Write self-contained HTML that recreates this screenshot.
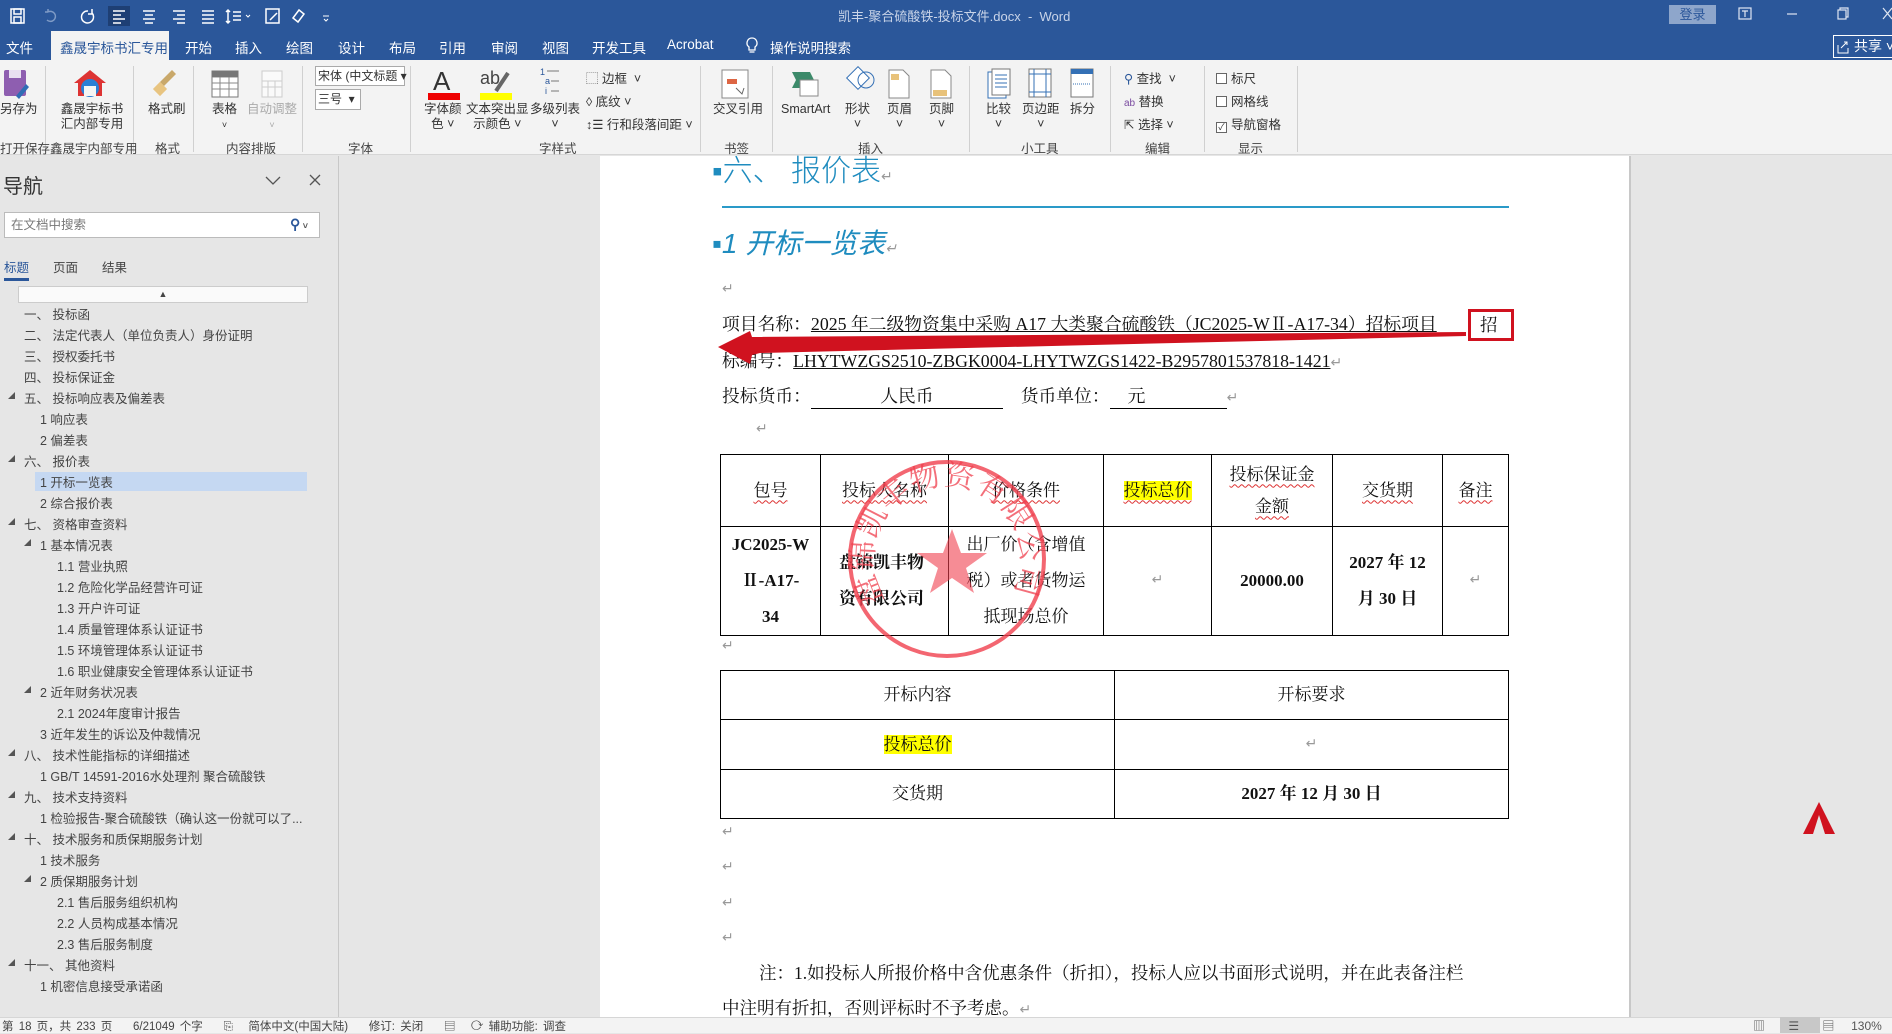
<!DOCTYPE html>
<html><head><meta charset="utf-8">
<style>
*{margin:0;padding:0;box-sizing:border-box}
body{width:1892px;height:1033px;overflow:hidden;position:relative;background:#e6e6e6;font-family:"Liberation Sans","Noto Sans CJK SC",sans-serif;color:#333}
.a{position:absolute;white-space:nowrap}
.tb{background:#2b579a}
.tab{position:absolute;top:37px;font-size:13.5px;color:#fff}
.rl{position:absolute;font-size:12.5px;color:#333;text-align:center;line-height:15px}
.gl{position:absolute;top:138px;font-size:12.5px;color:#444}
.sep{position:absolute;top:66px;width:1px;height:86px;background:#d0d0d0}
.nav{position:absolute;font-size:12.5px;color:#444}
.tri{position:absolute;width:0;height:0;border-left:7px solid transparent;border-bottom:7px solid #555}
.doc{font-family:"Liberation Serif","Noto Serif CJK SC",serif;color:#111}
.ret{color:#999;font-size:14px}
table{border-collapse:collapse;position:absolute}
td{border:1.5px solid #000;text-align:center;font-family:"Liberation Serif","Noto Serif CJK SC",serif;font-size:17px;color:#111;line-height:36px;padding:0}
.u{text-decoration:underline wavy #d33;text-decoration-thickness:1px;text-underline-offset:4px}
.hl{background:#ffff00}
.ico{position:absolute}
.cb{display:inline-block;width:11px;height:11px;border:1px solid #666;background:#fff;vertical-align:-1px;margin-right:4px}
</style></head><body>
<!-- title bar -->
<div class="a tb" style="left:0;top:0;width:1892px;height:60px"></div>
<svg class="ico" style="left:8px;top:6px" width="330" height="20" viewBox="0 0 330 20" fill="none" stroke="#fff" stroke-width="1.5">
<rect x="3" y="3" width="13" height="14"/><rect x="6" y="3" width="7" height="5"/><rect x="6" y="11" width="7" height="6"/>
<path d="M40 6 a5 5 0 1 1 -1 8 M40 6 l-3 0 M40 6 l0 -3" stroke="#7f9bc6"/>
<path d="M80 5 a6 6 0 1 0 4 2 M84 3 v5 h-4"/>
<rect x="100" y="0" width="22" height="20" fill="#1e3f74" stroke="none"/>
<path d="M105 5h12M105 9h8M105 13h12M105 17h8"/>
<path d="M135 5h12M137 9h8M135 13h12M137 17h8"/>
<path d="M165 5h12M169 9h8M165 13h12M169 17h8"/>
<path d="M194 5h12M194 9h12M194 13h12M194 17h12"/>
<path d="M220 4v13M218 6l2-2 2 2M218 15l2 2 2-2M225 6h8M225 10h8M225 14h8"/>
<path d="M238 9l2 2 2-2" stroke-width="1"/>
<rect x="258" y="3" width="13" height="14"/><path d="M262 14l7-7"/>
<path d="M285 12l6-8 5 4-6 8z"/>
<path d="M315 10h6M316 13l2 2 2-2" stroke-width="1"/>
</svg>
<div class="a" style="left:838px;top:6px;font-size:13px;color:#c9d4e8">凯丰-聚合硫酸铁-投标文件.docx&nbsp; -&nbsp; Word</div>
<div class="a" style="left:1669px;top:5px;width:47px;height:19px;background:#8ea6cb;color:#2b579a;font-size:13px;text-align:center;line-height:19px">登录</div>
<svg class="ico" style="left:1735px;top:5px" width="157" height="20" fill="none" stroke="#dfe6f2" stroke-width="1.2">
<rect x="4" y="3" width="12" height="11"/><path d="M7 6h6M10 6v6"/>
<path d="M52 9h10"/><rect x="103" y="5" width="8" height="9"/><path d="M105 5v-2h8v9h-2"/>
<path d="M148 3l9 11M157 3l-9 11"/>
</svg>
<div class="tab" style="left:6px">文件</div>
<div class="a" style="left:51px;top:31px;width:118px;height:29px;background:#f3f3f3"></div>
<div class="tab" style="left:60px;color:#2b579a">鑫晟宇标书汇专用</div>
<div class="tab" style="left:185px">开始</div><div class="tab" style="left:235px">插入</div><div class="tab" style="left:286px">绘图</div><div class="tab" style="left:338px">设计</div><div class="tab" style="left:389px">布局</div><div class="tab" style="left:439px">引用</div><div class="tab" style="left:491px">审阅</div><div class="tab" style="left:542px">视图</div><div class="tab" style="left:592px">开发工具</div><div class="tab" style="left:667px">Acrobat</div>
<svg class="ico" style="left:744px;top:36px" width="16" height="20" fill="none" stroke="#fff" stroke-width="1.3"><path d="M8 2a5 5 0 0 0-3 9v3h6v-3a5 5 0 0 0-3-9zM5.5 16h5"/></svg>
<div class="tab" style="left:770px">操作说明搜索</div>
<div class="a" style="left:1833px;top:35px;width:62px;height:23px;border:1px solid #fff;color:#fff;font-size:14px;padding-left:20px;line-height:21px">共享 ˅</div>
<svg class="ico" style="left:1836px;top:39px" width="14" height="16" fill="none" stroke="#fff"><path d="M2 6v8h10v-5M5 9l6-6M8 3h3v3"/></svg>
<!-- ribbon -->
<div class="a" style="left:0;top:60px;width:1892px;height:95px;background:#f3f3f3;border-bottom:1px solid #d6d6d6"></div>
<div class="sep" style="left:45px"></div><div class="sep" style="left:133px"></div><div class="sep" style="left:193px"></div><div class="sep" style="left:302px"></div><div class="sep" style="left:410px"></div><div class="sep" style="left:700px"></div><div class="sep" style="left:772px"></div><div class="sep" style="left:969px"></div><div class="sep" style="left:1110px"></div><div class="sep" style="left:1204px"></div><div class="sep" style="left:1297px"></div>
<svg class="ico" style="left:0;top:66px" width="1300" height="40">
<rect x="4" y="4" width="22" height="26" rx="2" fill="#8e5eb0"/><rect x="9" y="4" width="12" height="8" fill="#e9e0f1"/><path d="M16 30l10-12 3 3-10 12z" fill="#2f6db5"/>
<path d="M90 4l-16 13h4v13h24v-13h4z" fill="#d33"/><circle cx="90" cy="22" r="9" fill="#2b7fd6"/><rect x="84" y="20" width="12" height="10" fill="#f5f5f5"/>
<path d="M160 16l12-12 4 4-12 12z" fill="#c9a86a"/><rect x="155" y="18" width="10" height="10" fill="#e8c480" transform="rotate(45 160 23)"/>
<rect x="212" y="5" width="26" height="26" fill="#fff" stroke="#777"/><path d="M212 11h26M212 17h26M212 23h26M220 5v26M229 5v26" stroke="#888"/><rect x="212" y="5" width="26" height="6" fill="#777"/>
<rect x="262" y="5" width="20" height="26" fill="#fafafa" stroke="#ccc"/><path d="M262 15h20M262 21h20M268 15v16M275 15v16" stroke="#ccc"/>
<text x="433" y="24" font-size="26" font-family="Liberation Sans" fill="#333">A</text><rect x="428" y="27" width="32" height="7" fill="#e00"/>
<text x="480" y="18" font-size="18" font-family="Liberation Sans" fill="#444">ab</text><path d="M496 25l12-18" stroke="#666" stroke-width="4"/><rect x="480" y="27" width="32" height="7" fill="#ff0"/>
<text x="540" y="9" font-size="9" fill="#2b579a">1</text><path d="M547 5h12M551 15h8M551 25h8" stroke="#777"/><text x="545" y="18" font-size="9" fill="#2b579a">a</text><text x="545" y="28" font-size="9" fill="#2b579a">i</text>
<rect x="722" y="4" width="26" height="28" fill="#fff" stroke="#888"/><rect x="727" y="13" width="10" height="5" fill="#d64"/><path d="M736 22l6 6 2-6" stroke="#666" fill="none"/>
<path d="M792 6h18l4 8-4 8h-18l4-8z" fill="#3c8a6a"/><rect x="800" y="14" width="18" height="16" fill="#fff" stroke="#888"/>
<rect x="850" y="4" width="16" height="16" fill="#fff" stroke="#3470b5" transform="rotate(45 858 12)"/><circle cx="866" cy="14" r="8" fill="none" stroke="#3470b5"/>
<path d="M889 4h14l6 6v22h-20z" fill="#fff" stroke="#888"/><rect x="891" y="8" width="8" height="6" fill="#e8c27a"/>
<path d="M931 4h14l6 6v22h-20z" fill="#fff" stroke="#888"/><rect x="933" y="24" width="14" height="6" fill="#e8c27a"/>
<rect x="988" y="6" width="18" height="26" fill="#fff" stroke="#3470b5"/><rect x="992" y="3" width="18" height="26" fill="#fff" stroke="#777"/><path d="M995 9h12M995 13h12M995 17h12M995 21h12" stroke="#3470b5"/>
<rect x="1029" y="3" width="22" height="28" fill="#fff" stroke="#777"/><path d="M1034 3v28M1046 3v28M1029 8h22M1029 26h22" stroke="#3470b5"/>
<rect x="1071" y="3" width="22" height="28" fill="#fff" stroke="#777"/><rect x="1071" y="3" width="22" height="5" fill="#3470b5"/><path d="M1073 18h18" stroke="#3470b5" stroke-dasharray="1 1"/>
</svg>
<div class="rl" style="left:0;top:102px">另存为</div>
<div class="rl" style="left:60px;top:102px;width:64px">鑫晟宇标书<br>汇内部专用</div>
<div class="rl" style="left:148px;top:102px">格式刷</div>
<div class="rl" style="left:212px;top:102px">表格<br><span style="font-size:9px">˅</span></div>
<div class="rl" style="left:247px;top:102px;color:#aaa">自动调整<br><span style="font-size:9px">˅</span></div>
<div class="a" style="left:315px;top:66px;width:90px;height:20px;background:#fff;border:1px solid #aaa;font-size:12px;line-height:18px;padding-left:2px">宋体 (中文标题 ▾</div>
<div class="a" style="left:315px;top:89px;width:46px;height:21px;background:#fff;border:1px solid #aaa;font-size:12px;line-height:19px;padding-left:2px">三号 &nbsp;▾</div>
<div class="rl" style="left:424px;top:102px">字体颜<br>色 ˅</div>
<div class="rl" style="left:466px;top:102px">文本突出显<br>示颜色 ˅</div>
<div class="rl" style="left:530px;top:102px">多级列表<br>˅</div>
<div class="a" style="left:586px;top:68px;font-size:12.5px">⬚ 边框 &nbsp;˅</div>
<div class="a" style="left:586px;top:91px;font-size:12.5px">◊ 底纹 ˅</div>
<div class="a" style="left:586px;top:114px;font-size:12.5px">↕☰ 行和段落间距 ˅</div>
<div class="rl" style="left:713px;top:102px">交叉引用</div>
<div class="rl" style="left:781px;top:102px">SmartArt</div>
<div class="rl" style="left:845px;top:102px">形状<br>˅</div>
<div class="rl" style="left:887px;top:102px">页眉<br>˅</div>
<div class="rl" style="left:929px;top:102px">页脚<br>˅</div>
<div class="rl" style="left:986px;top:102px">比较<br>˅</div>
<div class="rl" style="left:1022px;top:102px">页边距<br>˅</div>
<div class="rl" style="left:1070px;top:102px">拆分</div>
<div class="a" style="left:1124px;top:68px;font-size:12.5px"><span style="color:#2b579a">⚲</span> 查找 &nbsp;˅</div>
<div class="a" style="left:1124px;top:91px;font-size:12.5px"><span style="color:#7a4ba0;font-size:10px">ab</span> 替换</div>
<div class="a" style="left:1124px;top:114px;font-size:12.5px">⇱ 选择 ˅</div>
<div class="a" style="left:1216px;top:68px;font-size:12.5px"><span class="cb"></span>标尺</div>
<div class="a" style="left:1216px;top:91px;font-size:12.5px"><span class="cb"></span>网格线</div>
<div class="a" style="left:1216px;top:114px;font-size:12.5px"><span class="cb" style="font-size:9px;line-height:9px;text-align:center">✓</span>导航窗格</div>
<div class="gl" style="left:0">打开保存</div><div class="gl" style="left:50px">鑫晟宇内部专用</div><div class="gl" style="left:155px">格式</div><div class="gl" style="left:226px">内容排版</div><div class="gl" style="left:348px">字体</div><div class="gl" style="left:539px">字样式</div><div class="gl" style="left:724px">书签</div><div class="gl" style="left:858px">插入</div><div class="gl" style="left:1021px">小工具</div><div class="gl" style="left:1145px">编辑</div><div class="gl" style="left:1238px">显示</div>
<!-- nav pane -->
<div class="a" style="left:338px;top:156px;width:1px;height:861px;background:#c8c8c8"></div>
<div class="a" style="left:3px;top:170px;font-size:20px;color:#333">导航</div>
<svg class="ico" style="left:263px;top:172px" width="60" height="18" fill="none" stroke="#555" stroke-width="1.3"><path d="M3 5l7 7 7-7M47 3l10 10M57 3l-10 10"/></svg>
<div class="a" style="left:4px;top:212px;width:316px;height:26px;background:#fff;border:1px solid #bbb;font-size:12.5px;color:#777;line-height:24px;padding-left:6px">在文档中搜索</div>
<div class="a" style="left:290px;top:216px;font-size:14px;color:#2b579a;font-weight:bold">⚲<span style="font-size:9px;color:#555"> ˅</span></div>
<div class="a" style="left:4px;top:257px;font-size:12.5px;color:#2b579a">标题</div>
<div class="a" style="left:4px;top:278px;width:25px;height:3px;background:#2b579a"></div>
<div class="a" style="left:53px;top:257px;font-size:12.5px;color:#444">页面</div>
<div class="a" style="left:102px;top:257px;font-size:12.5px;color:#444">结果</div>
<div class="a" style="left:18px;top:286px;width:290px;height:17px;background:#fafafa;border:1px solid #ccc;text-align:center;font-size:9px;line-height:15px;color:#444">▲</div>
<div class="a" style="left:35px;top:472px;width:272px;height:19px;background:#c5d8f2"></div>
<div class="nav" style="left:24px;top:304px">一、 投标函</div>
<div class="nav" style="left:24px;top:325px">二、 法定代表人（单位负责人）身份证明</div>
<div class="nav" style="left:24px;top:346px">三、 授权委托书</div>
<div class="nav" style="left:24px;top:367px">四、 投标保证金</div>
<div class="tri" style="left:8px;top:392px"></div><div class="nav" style="left:24px;top:388px">五、 投标响应表及偏差表</div>
<div class="nav" style="left:40px;top:409px">1 响应表</div>
<div class="nav" style="left:40px;top:430px">2 偏差表</div>
<div class="tri" style="left:8px;top:455px"></div><div class="nav" style="left:24px;top:451px">六、 报价表</div>
<div class="nav" style="left:40px;top:472px">1 开标一览表</div>
<div class="nav" style="left:40px;top:493px">2 综合报价表</div>
<div class="tri" style="left:8px;top:518px"></div><div class="nav" style="left:24px;top:514px">七、 资格审查资料</div>
<div class="tri" style="left:24px;top:539px"></div><div class="nav" style="left:40px;top:535px">1 基本情况表</div>
<div class="nav" style="left:57px;top:556px">1.1 营业执照</div>
<div class="nav" style="left:57px;top:577px">1.2 危险化学品经营许可证</div>
<div class="nav" style="left:57px;top:598px">1.3 开户许可证</div>
<div class="nav" style="left:57px;top:619px">1.4 质量管理体系认证证书</div>
<div class="nav" style="left:57px;top:640px">1.5 环境管理体系认证证书</div>
<div class="nav" style="left:57px;top:661px">1.6 职业健康安全管理体系认证证书</div>
<div class="tri" style="left:24px;top:686px"></div><div class="nav" style="left:40px;top:682px">2 近年财务状况表</div>
<div class="nav" style="left:57px;top:703px">2.1 2024年度审计报告</div>
<div class="nav" style="left:40px;top:724px">3 近年发生的诉讼及仲裁情况</div>
<div class="tri" style="left:8px;top:749px"></div><div class="nav" style="left:24px;top:745px">八、 技术性能指标的详细描述</div>
<div class="nav" style="left:40px;top:766px">1 GB/T 14591-2016水处理剂 聚合硫酸铁</div>
<div class="tri" style="left:8px;top:791px"></div><div class="nav" style="left:24px;top:787px">九、 技术支持资料</div>
<div class="nav" style="left:40px;top:808px">1 检验报告-聚合硫酸铁（确认这一份就可以了...</div>
<div class="tri" style="left:8px;top:833px"></div><div class="nav" style="left:24px;top:829px">十、 技术服务和质保期服务计划</div>
<div class="nav" style="left:40px;top:850px">1 技术服务</div>
<div class="tri" style="left:24px;top:875px"></div><div class="nav" style="left:40px;top:871px">2 质保期服务计划</div>
<div class="nav" style="left:57px;top:892px">2.1 售后服务组织机构</div>
<div class="nav" style="left:57px;top:913px">2.2 人员构成基本情况</div>
<div class="nav" style="left:57px;top:934px">2.3 售后服务制度</div>
<div class="tri" style="left:8px;top:959px"></div><div class="nav" style="left:24px;top:955px">十一、 其他资料</div>
<div class="nav" style="left:40px;top:976px">1 机密信息接受承诺函</div>
<!-- page -->
<div class="a" style="left:600px;top:156px;width:1031px;height:861px;background:#fff;border-right:2px solid #c8c8c8"></div>
<div class="a" style="left:1803px;top:802px;width:0;height:0;border-left:16px solid transparent;border-right:16px solid transparent;border-bottom:32px solid #d0121f"></div>
<div class="a" style="left:1813px;top:815px;width:0;height:0;border-left:6px solid transparent;border-right:6px solid transparent;border-bottom:19px solid #e6e6e6"></div>
<div class="a doc" style="left:712px;top:146px;font-size:30px;color:#1f8cbf;font-family:'Liberation Sans','Noto Sans CJK SC',sans-serif;font-weight:300">▪六、 报价表<span class="ret">↵</span></div>
<div class="a" style="left:722px;top:206px;width:787px;height:1.5px;background:#2a9ac8"></div>
<div class="a doc" style="left:712px;top:222px;font-size:28px;color:#1f8cbf;font-style:italic;font-family:'Liberation Sans','Noto Sans CJK SC',sans-serif">▪1 开标一览表<span class="ret">↵</span></div>
<div class="a ret" style="left:722px;top:280px">↵</div>
<div class="a doc" style="left:722px;top:311px;font-size:17.8px">项目名称：<u>2025 年二级物资集中采购 A17 大类聚合硫酸铁（JC2025-WⅡ-A17-34）招标项目</u></div>
<div class="a" style="left:1468px;top:309px;width:46px;height:32px;border:3px solid #d0121f"></div>
<div class="a doc" style="left:1480px;top:312px;font-size:17.5px">招</div>
<div class="a doc" style="left:722px;top:348px;font-size:17.8px">标编号：<u>LHYTWZGS2510-ZBGK0004-LHYTWZGS1422-B2957801537818-1421</u><span class="ret">↵</span></div>
<div class="a doc" style="left:722px;top:383px;font-size:17.8px">投标货币：<span style="display:inline-block;width:192px;border-bottom:1px solid #000;text-align:center">人民币</span>&nbsp;&nbsp;&nbsp;&nbsp;货币单位：<span style="display:inline-block;width:117px;border-bottom:1px solid #000;padding-left:18px">元</span><span class="ret">↵</span></div>
<svg class="ico" style="left:700px;top:320px" width="780" height="50"><polygon points="18,27 50,11 52,17 766,12 766,16 60,33 52,35 50,44" fill="#d0121f"/></svg>
<div class="a ret" style="left:756px;top:420px">↵</div>
<table style="left:720px;top:454px;width:789px">
<tr style="height:72px"><td style="width:100px"><span class="u">包号</span></td><td style="width:128px"><span class="u">投标人名称</span></td><td style="width:155px"><span class="u">价格条件</span></td><td style="width:108px"><span class="u hl">投标总价</span></td><td style="width:121px;line-height:32px"><span class="u">投标保证金</span><br><span class="u">金额</span></td><td style="width:110px"><span class="u">交货期</span></td><td><span class="u">备注</span></td></tr>
<tr style="height:106px"><td style="font-weight:bold">JC2025-W<br>Ⅱ-A17-<br>34</td><td style="font-weight:bold;text-align:left;padding-left:18px">盘锦凯丰物<br>资有限公司</td><td>出厂价（含增值<br>税）或者货物运<br>抵现场总价</td><td class="ret">↵</td><td style="font-weight:bold">20000.00</td><td style="font-weight:bold">2027 年 12<br>月 30 日</td><td class="ret">↵</td></tr>
</table>
<div class="a ret" style="left:722px;top:637px">↵</div>
<table style="left:720px;top:670px;width:789px">
<tr style="height:49px"><td style="width:394px">开标内容</td><td>开标要求</td></tr>
<tr style="height:50px"><td><span class="hl">投标总价</span></td><td class="ret">↵</td></tr>
<tr style="height:49px"><td>交货期</td><td style="font-weight:bold">2027 年 12 月 30 日</td></tr>
</table>
<svg class="ico" style="left:830px;top:440px" width="240" height="240">
<defs><path id="cp" d="M55,160 A74,74 0 1,1 179,160"/></defs>
<circle cx="117" cy="119" r="97" fill="none" stroke="#f0404e" stroke-width="4" opacity=".8"/>
<text font-size="30" fill="#f0404e" opacity=".75" font-family="Noto Serif CJK SC" letter-spacing="1"><textPath href="#cp">盘锦凯丰物资有限公司</textPath></text>
<polygon points="122,89 131,113 157,113 136,128 144,153 122,138 100,153 108,128 87,113 113,113" fill="#f0404e" opacity=".6"/>
</svg>
<div class="a ret" style="left:722px;top:823px">↵</div>
<div class="a ret" style="left:722px;top:858px">↵</div>
<div class="a ret" style="left:722px;top:894px">↵</div>
<div class="a ret" style="left:722px;top:929px">↵</div>
<div class="a doc" style="left:759px;top:960px;font-size:17.5px">注：1.如投标人所报价格中含优惠条件（折扣），投标人应以书面形式说明，并在此表备注栏</div>
<div class="a doc" style="left:722px;top:995px;font-size:17.5px">中注明有折扣，否则评标时不予考虑。<span class="ret">↵</span></div>
<!-- status -->
<div class="a" style="left:0;top:1017px;width:1892px;height:16px;background:#f3f3f3;border-top:1px solid #d6d6d6"></div>
<div class="a" style="left:2px;top:1018px;font-size:11.5px;color:#444;word-spacing:2px">第 18 页，共 233 页 &nbsp;&nbsp; 6/21049 个字 &nbsp;&nbsp; ⎘ &nbsp; 简体中文(中国大陆) &nbsp;&nbsp; 修订: 关闭 &nbsp;&nbsp; ▤ &nbsp; ⟳ 辅助功能: 调查</div>
<div class="a" style="left:1780px;top:1017px;width:40px;height:16px;background:#c8c8c8"></div>
<div class="a" style="left:1753px;top:1017px;font-size:12px;color:#555">▥ &nbsp;&nbsp;&nbsp;&nbsp;&nbsp; ☰ &nbsp;&nbsp;&nbsp;&nbsp;&nbsp; ▤ &nbsp;&nbsp;&nbsp; 130%</div>
</body></html>
